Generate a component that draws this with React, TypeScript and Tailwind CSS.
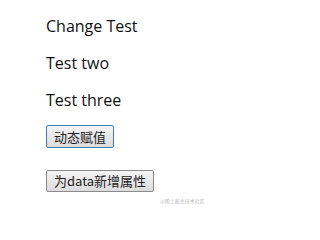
export default function App() {
  return (
    <div className="relative w-[206px] h-[210px] bg-white pl-[46px] pt-[16px] font-['Open_Sans','Noto_Sans_CJK_SC',sans-serif] text-[#111]">
      <p className="text-[16px] leading-[21px] m-0">Change Test</p>
      <p className="text-[16px] leading-[21px] mt-[16px]">Test two</p>
      <p className="text-[16px] leading-[21px] mt-[16px]">Test three</p>
      <div className="mt-[14px] flex flex-col items-start">
        <button className="h-[23px] px-[7px] text-[13px] leading-[21px] border border-[#3c7fb1] rounded-[2px] bg-gradient-to-b from-[#f4f4f4] to-[#dcdcdc] text-[#222] font-['Noto_Sans_CJK_SC',sans-serif]">
          动态赋值
        </button>
        <button className="mt-[22px] h-[22px] px-[7px] text-[13px] leading-[20px] border border-[#8a8a8a] rounded-[2px] bg-gradient-to-b from-[#f4f4f4] to-[#dcdcdc] text-[#222] font-['Noto_Sans_CJK_SC',sans-serif]">
          为data新增属性
        </button>
      </div>
      <span className="absolute left-[160px] top-[197px] text-[5px] text-[#bbb] font-['Noto_Sans_CJK_SC',sans-serif]">@稀土掘金技术社区</span>
    </div>
  );
}
